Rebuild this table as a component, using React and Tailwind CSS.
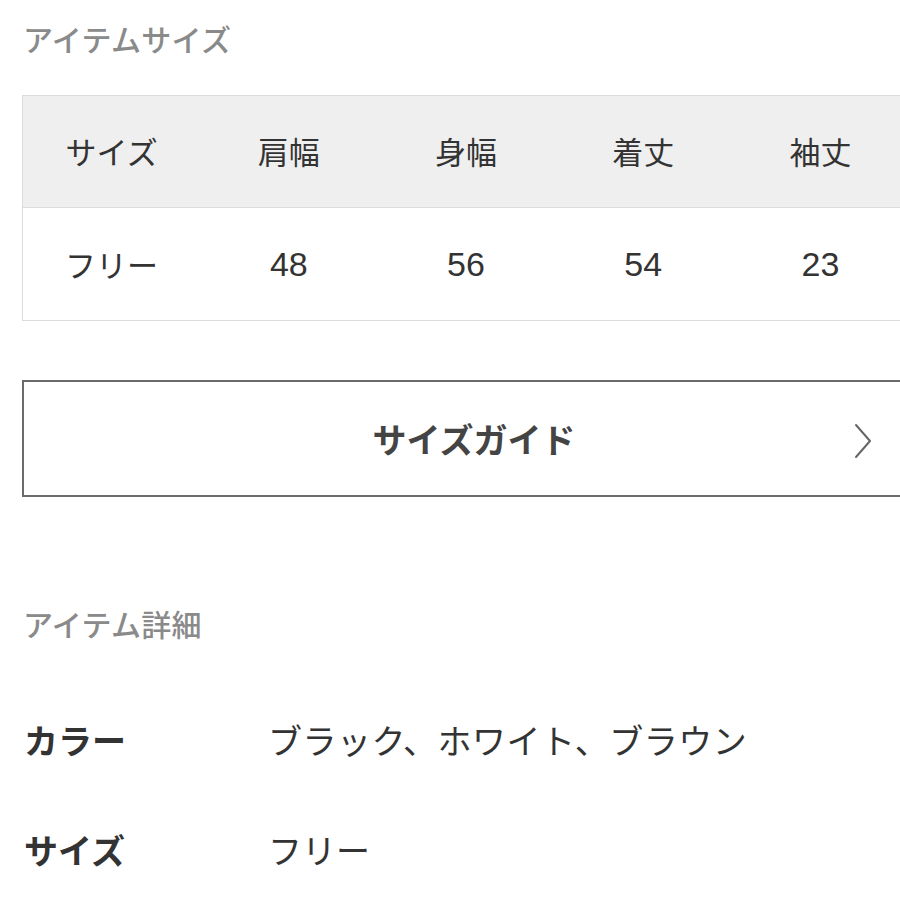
import React from "react";

const font = { fontFamily: '"Noto Sans CJK JP", "Noto Sans", sans-serif' };
const num = { fontFamily: '"Liberation Sans", Arial, sans-serif' };

export default function App() {
  const heads = ["サイズ", "肩幅", "身幅", "着丈", "袖丈"];
  const vals = ["フリー", "48", "56", "54", "23"];
  return (
    <div className="w-[900px] h-[900px] overflow-hidden bg-white" style={font}>
      <div className="h-[76px] flex items-center pl-[23px] text-[30px] text-[#8a8a8a] font-medium tracking-[0.3px]">
        アイテムサイズ
      </div>
      <div className="mt-[19px] ml-[22px] w-[888px] border border-[#dcdcdc]">
        <div className="flex h-[112px] bg-[#efefef] border-b border-[#dcdcdc]">
          {heads.map((h) => (
            <div key={h} className="flex-1 flex items-center justify-center text-[31px] text-[#333]">
              {h}
            </div>
          ))}
        </div>
        <div className="flex h-[112px] bg-white">
          {vals.map((v, i) => (
            <div
              key={v}
              className={i === 0 ? "flex-1 flex items-center justify-center text-[31px] text-[#333]" : "flex-1 flex items-center justify-center text-[34px] text-[#333]"}
              style={i === 0 ? undefined : num}
            >
              {v}
            </div>
          ))}
        </div>
      </div>
      <div className="mt-[59px] ml-[22px] w-[904px] h-[117px] border-2 border-[#6b6b6b] flex items-center justify-center relative">
        <span className="text-[34px] font-bold text-[#444]">サイズガイド</span>
        <svg className="absolute left-[828px] top-[41px]" width="22" height="36" viewBox="0 0 22 36" fill="none">
          <path d="M4 2 L18 18 L4 34" stroke="#666" strokeWidth="2" strokeLinecap="round" strokeLinejoin="round" />
        </svg>
      </div>
      <div className="mt-[96px] h-[60px] flex items-center pl-[23px] text-[30px] text-[#8a8a8a] font-medium tracking-[0.3px]">
        アイテム詳細
      </div>
      <div className="mt-[56px] h-[60px] flex items-center pl-[24px] text-[34px] text-[#333]">
        <div className="w-[244px] font-bold">カラー</div>
        <div className="tracking-[0.5px]">ブラック、ホワイト、ブラウン</div>
      </div>
      <div className="mt-[50px] h-[60px] flex items-center pl-[24px] text-[34px] text-[#333]">
        <div className="w-[244px] font-bold">サイズ</div>
        <div>フリー</div>
      </div>
    </div>
  );
}
